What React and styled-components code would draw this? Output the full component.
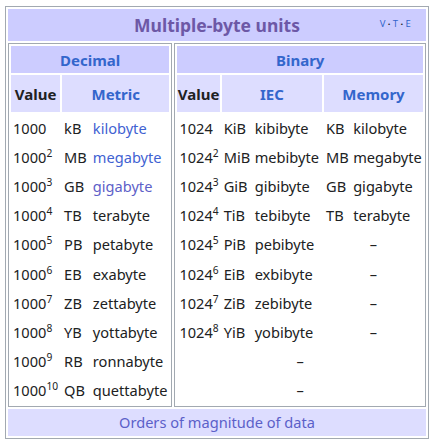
import styled, { createGlobalStyle } from "styled-components";

const GlobalStyle = createGlobalStyle`
  body {
    margin: 0;
    background: #fff;
    font-family: "Noto Sans", "Open Sans", "Liberation Sans", sans-serif;
    color: #202122;
  }
`;

const Navbox = styled.div`
  width: 424px;
  margin: 6px 0 0 5px;
  box-sizing: border-box;
  border: 1px solid #a2a9b1;
  padding: 2px;
  display: flex;
  flex-direction: column;
  gap: 2px;
  background: #fff;
`;

const TitleBar = styled.div`
  height: 32px;
  background: #ccf;
  display: grid;
  grid-template-columns: 1fr auto 1fr;
  align-items: center;
`;

const Title = styled.div`
  grid-column: 2;
  font-size: 17.5px;
  font-weight: 700;
  color: #6d58a6;
`;

const Vte = styled.div`
  grid-column: 3;
  justify-self: end;
  padding-right: 15px;
  margin-top: -3px;
  font-size: 9.5px;
  color: #3366cc;
  letter-spacing: 0.3px;
  span {
    color: #202122;
    font-weight: 700;
    margin: 0 2px;
  }
`;

const Body = styled.div`
  display: flex;
  gap: 2px;
`;

const Group = styled.table`
  border: 1px solid #a2a9b1;
  border-spacing: 2px;
  width: ${p => p.$width ? `${p.$width}px` : "auto"};
  flex: ${p => p.$width ? "none" : 1};
  font-size: 14.6px;
  white-space: nowrap;
`;

const GroupHead = styled.th`
  height: 27px;
  padding: 0;
  background: #ccf;
  color: #3366cc;
  font-size: 15px;
  font-weight: 700;
`;

const ColHead = styled.th`
  height: 37px;
  padding: 0;
  background: #ddf;
  font-size: 15px;
  font-weight: 700;
  color: ${p => p.$link ? "#3366cc" : "#202122"};
`;

const Cell = styled.td`
  height: 27.2px;
  padding: 0 ${p => p.$pad ?? 2}px 0 2px;
  text-align: ${p => p.$center ? "center" : "left"};
  color: ${p => p.$color || "#202122"};
`;

const Sup = styled.sup`
  font-size: 0.7em;
  line-height: 0;
  vertical-align: 0.55em;
`;

const Footer = styled.div`
  height: 27px;
  background: #ddf;
  display: flex;
  align-items: center;
  justify-content: center;
  font-size: 14.6px;
  color: #5b60c9;
`;

const decimal = [
  ["", "kB", "kilobyte", "#3f62d2"],
  ["2", "MB", "megabyte", "#3f62d2"],
  ["3", "GB", "gigabyte", "#5d60c8"],
  ["4", "TB", "terabyte"],
  ["5", "PB", "petabyte"],
  ["6", "EB", "exabyte"],
  ["7", "ZB", "zettabyte"],
  ["8", "YB", "yottabyte"],
  ["9", "RB", "ronnabyte"],
  ["10", "QB", "quettabyte"],
];

const binary = [
  ["", "KiB", "kibibyte", "KB", "kilobyte"],
  ["2", "MiB", "mebibyte", "MB", "megabyte"],
  ["3", "GiB", "gibibyte", "GB", "gigabyte"],
  ["4", "TiB", "tebibyte", "TB", "terabyte"],
  ["5", "PiB", "pebibyte"],
  ["6", "EiB", "exbibyte"],
  ["7", "ZiB", "zebibyte"],
  ["8", "YiB", "yobibyte"],
  [null],
  [null],
];

export default function App() {
  return (
    <>
      <GlobalStyle />
      <Navbox>
        <TitleBar>
          <Title>Multiple-byte units</Title>
          <Vte>V<span>·</span>T<span>·</span>E</Vte>
        </TitleBar>
        <Body>
          <Group $width={164}>
            <thead>
              <tr><GroupHead colSpan={3}>Decimal</GroupHead></tr>
              <tr>
                <ColHead>Value</ColHead>
                <ColHead colSpan={2} $link>Metric</ColHead>
              </tr>
            </thead>
            <tbody>
              {decimal.map(([exp, sym, name, color]) => (
                <tr key={sym}>
                  <Cell>1000{exp && <Sup>{exp}</Sup>}</Cell>
                  <Cell>{sym}</Cell>
                  <Cell $color={color}>{name}</Cell>
                </tr>
              ))}
            </tbody>
          </Group>
          <Group>
            <thead>
              <tr><GroupHead colSpan={5}>Binary</GroupHead></tr>
              <tr>
                <ColHead>Value</ColHead>
                <ColHead colSpan={2} $link>IEC</ColHead>
                <ColHead colSpan={2} $link>Memory</ColHead>
              </tr>
            </thead>
            <tbody>
              {binary.map(([exp, sym, name, mem, memName], i) => (
                <tr key={i}>
                  {exp === null ? (
                    <Cell colSpan={5} $center>–</Cell>
                  ) : (
                    <>
                      <Cell $pad={0}>1024{exp && <Sup>{exp}</Sup>}</Cell>
                      <Cell $pad={0}>{sym}</Cell>
                      <Cell>{name}</Cell>
                      {mem ? (
                        <>
                          <Cell $pad={0}>{mem}</Cell>
                          <Cell $pad={0}>{memName}</Cell>
                        </>
                      ) : (
                        <Cell colSpan={2} $center>–</Cell>
                      )}
                    </>
                  )}
                </tr>
              ))}
            </tbody>
          </Group>
        </Body>
        <Footer>Orders of magnitude of data</Footer>
      </Navbox>
    </>
  );
}
